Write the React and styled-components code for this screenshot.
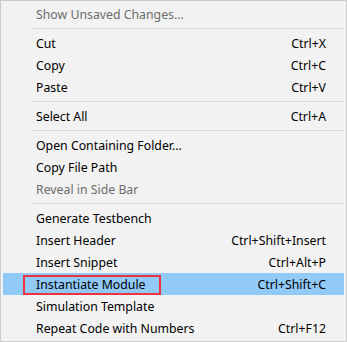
import React from "react";
import styled, { createGlobalStyle } from "styled-components";

const Global = createGlobalStyle`
  html, body { margin: 0; padding: 0; background: #f2f2f2; }
  body { font-family: "Noto Sans", "Liberation Sans", sans-serif; }
`;

const Menu = styled.div`
  box-sizing: border-box;
  width: 347px;
  height: 342px;
  background: #f2f2f2;
  border: 1px solid #cccccc;
  padding: 2px;
  display: flex;
  flex-direction: column;
  font-family: "Noto Sans", "Liberation Sans", sans-serif;
  font-size: 12.3px;
`;

const Row = styled.div`
  position: relative;
  height: 22px;
  flex: none;
  display: flex;
  align-items: center;
  justify-content: space-between;
  padding: 0 18px 0 33px;
  background: ${(p) => (p.$active ? "#91c9f7" : "transparent")};
  color: ${(p) => (p.$disabled ? "#6d6d6d" : "#000000")};
  white-space: nowrap;
`;

const Label = styled.span``;
const Shortcut = styled.span``;

const Sep = styled.div`
  flex: none;
  height: 1px;
  margin: 3px 0 3px 28px;
  background: #d7d7d7;
`;

const Mark = styled.div`
  position: absolute;
  left: 20px;
  top: 2px;
  width: 134px;
  height: 16px;
  border: 2px solid #ec3340;
  pointer-events: none;
`;

const items = [
  { label: "Show Unsaved Changes...", disabled: true },
  "sep",
  { label: "Cut", sc: "Ctrl+X" },
  { label: "Copy", sc: "Ctrl+C" },
  { label: "Paste", sc: "Ctrl+V" },
  "sep",
  { label: "Select All", sc: "Ctrl+A" },
  "sep",
  { label: "Open Containing Folder..." },
  { label: "Copy File Path" },
  { label: "Reveal in Side Bar", disabled: true },
  "sep",
  { label: "Generate Testbench" },
  { label: "Insert Header", sc: "Ctrl+Shift+Insert" },
  { label: "Insert Snippet", sc: "Ctrl+Alt+P" },
  { label: "Instantiate Module", sc: "Ctrl+Shift+C", active: true },
  { label: "Simulation Template" },
  { label: "Repeat Code with Numbers", sc: "Ctrl+F12" },
];

export default function App() {
  return (
    <>
      <Global />
      <Menu>
        {items.map((it, i) =>
          it === "sep" ? (
            <Sep key={i} />
          ) : (
            <Row key={i} $active={it.active} $disabled={it.disabled}>
              {it.active && <Mark />}
              <Label>{it.label}</Label>
              {it.sc && <Shortcut>{it.sc}</Shortcut>}
            </Row>
          )
        )}
      </Menu>
    </>
  );
}
